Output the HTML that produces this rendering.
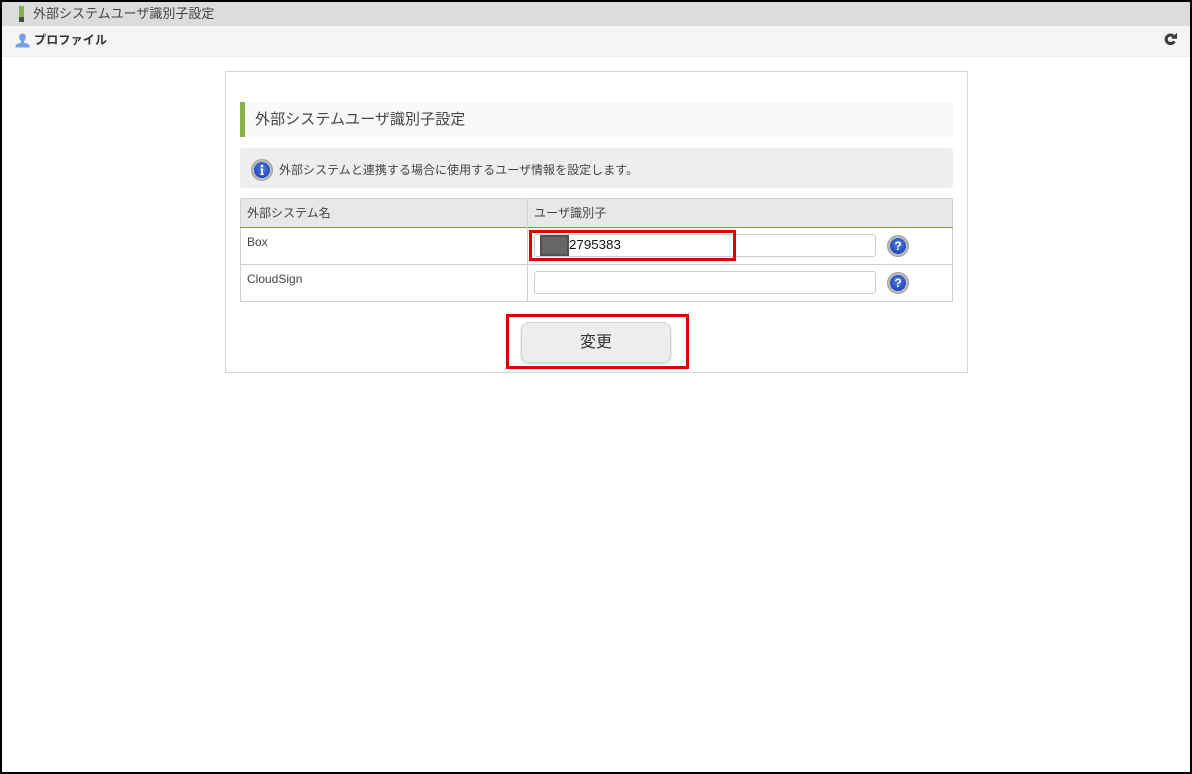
<!DOCTYPE html>
<html lang="ja"><head><meta charset="utf-8"><title>外部システムユーザ識別子設定</title>
<style>
html,body{margin:0;padding:0;background:#fff}
body{width:1192px;height:774px;position:relative;overflow:hidden;font-family:"Liberation Sans","Noto Sans CJK JP",sans-serif;color:#333}
div,span,svg{position:absolute;box-sizing:border-box}
.t{white-space:nowrap;line-height:1}
</style></head><body>
<div style="left:2px;top:2px;width:1188px;height:24px;background:#dcdcdc"></div>
<div style="left:19px;top:6px;width:5px;height:11px;background:#8ab04a"></div>
<div style="left:19px;top:17px;width:5px;height:5px;background:#4a4f44"></div>
<div class="t" style="left:33px;top:7px;font-size:13px;color:#444">外部システムユーザ識別子設定</div>
<div style="left:2px;top:26px;width:1188px;height:31px;background:#f5f5f5;border-bottom:1px solid #eee"></div>
<svg style="left:15px;top:33px" width="15" height="15" viewBox="0 0 15 15"><path d="M7.5 0.5C5.3 0.5 4.2 2 4.2 4.2C4.2 6 5 7.2 6 8V9.5L1.5 11.2C0.8 11.5 0.5 12.2 0.5 13V14.5H14.5V13C14.5 12.2 14.2 11.5 13.5 11.2L9 9.5V8C10 7.2 10.8 6 10.8 4.2C10.8 2 9.7 0.5 7.5 0.5Z" fill="#74a0ea"/></svg>
<div class="t" style="left:34px;top:34px;font-size:12px;letter-spacing:.2px;font-weight:bold;color:#333">プロファイル</div>
<svg style="left:1163px;top:32px" width="15" height="15" viewBox="0 0 15 15"><path d="M11.3 9.3A4.3 4.3 0 1 1 10.6 4.3" fill="none" stroke="#3a3a3a" stroke-width="3"/><path d="M8 6.8H14V0.8Z" fill="#3a3a3a"/></svg>

<div style="left:225px;top:71px;width:743px;height:302px;border:1px solid #d5d5d5;background:#fff"></div>
<div style="left:240px;top:102px;width:713px;height:35px;background:#f9f9f9;border-left:5px solid #8ab04a"></div>
<div class="t" style="left:255px;top:112px;font-size:15px;letter-spacing:.08px;color:#444">外部システムユーザ識別子設定</div>
<div style="left:240px;top:148px;width:713px;height:40px;background:#eee;border-radius:3px"></div>
<svg style="left:251px;top:159px" width="22" height="22" viewBox="0 0 22 22"><defs><radialGradient id="b" cx="50%" cy="40%" r="60%"><stop offset="0" stop-color="#4f7fe0"/><stop offset="1" stop-color="#2346b8"/></radialGradient></defs><circle cx="11" cy="11" r="10.5" fill="#bcbcbc" stroke="#a0a0a0" stroke-width="1"/><circle cx="11" cy="11" r="8" fill="url(#b)"/><circle cx="11" cy="7" r="1.3" fill="#fff"/><path d="M9.8 9.5H12.1V14.8H12.8V16H9.4V14.8H10.1V10.6H9.8Z" fill="#fff"/></svg>
<div class="t" style="left:279px;top:164px;font-size:12px;letter-spacing:.03px;color:#444">外部システムと連携する場合に使用するユーザ情報を設定します。</div>

<div style="left:240px;top:198px;width:713px;height:104px;border:1px solid #d0d0d0"></div>
<div style="left:241px;top:199px;width:711px;height:28px;background:#e8e8e8"></div>
<div style="left:240px;top:227px;width:713px;height:1px;background:#7fa040"></div>
<div style="left:240px;top:264px;width:713px;height:1px;background:#d0d0d0"></div>
<div style="left:527px;top:198px;width:1px;height:104px;background:#d0d0d0"></div>
<div class="t" style="left:247px;top:207px;font-size:12px;color:#444">外部システム名</div>
<div class="t" style="left:534px;top:207px;font-size:12px;letter-spacing:.1px;color:#444">ユーザ識別子</div>
<div class="t" style="left:247px;top:236px;font-size:12px;color:#444">Box</div>
<div class="t" style="left:247px;top:273px;font-size:12px;color:#444">CloudSign</div>

<div style="left:534px;top:234px;width:342px;height:23px;border:1px solid #ccc;border-radius:3px;background:#fff"></div>
<div style="left:534px;top:271px;width:342px;height:23px;border:1px solid #ccc;border-radius:3px;background:#fff"></div>
<div style="left:540px;top:235px;width:29px;height:21px;background:#666;border:2px solid #505050"></div>
<div class="t" style="left:569px;top:238px;font-size:13.33px;color:#111">2795383</div>
<div style="left:529px;top:230px;width:207px;height:31px;border:3px solid #d90000"></div>

<svg style="left:887px;top:235px" width="22" height="22" viewBox="0 0 22 22"><circle cx="11" cy="11" r="10.5" fill="#bcbcbc" stroke="#a0a0a0" stroke-width="1"/><circle cx="11" cy="11" r="8" fill="url(#b)"/><text x="11" y="15" text-anchor="middle" font-family="Liberation Sans" font-weight="bold" font-size="12" fill="#fff">?</text></svg>
<svg style="left:887px;top:272px" width="22" height="22" viewBox="0 0 22 22"><circle cx="11" cy="11" r="10.5" fill="#bcbcbc" stroke="#a0a0a0" stroke-width="1"/><circle cx="11" cy="11" r="8" fill="url(#b)"/><text x="11" y="15" text-anchor="middle" font-family="Liberation Sans" font-weight="bold" font-size="12" fill="#fff">?</text></svg>

<div style="left:521px;top:322px;width:150px;height:41px;background:#ededed;border:1px solid #d5d5d5;border-radius:8px;box-shadow:0 1px 2px rgba(0,0,0,.2)"></div>
<div class="t" style="left:580px;top:335px;font-size:16px;color:#333">変更</div>
<div style="left:506px;top:314px;width:183px;height:55px;border:3px solid #d90000"></div>

<div style="left:0;top:0;width:1192px;height:774px;border:2px solid #000"></div>
</body></html>
